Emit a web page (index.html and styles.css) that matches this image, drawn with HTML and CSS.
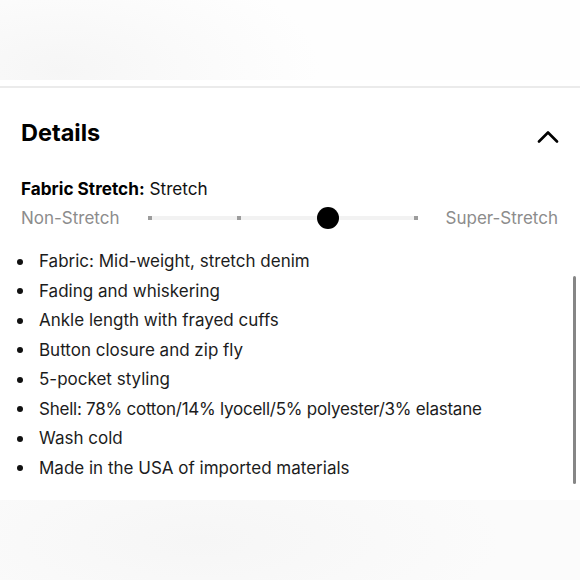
FILE: index.html
```html
<!DOCTYPE html>
<html lang="en">
<head>
<meta charset="utf-8">
<title>Details</title>
<link rel="stylesheet" href="styles.css">
</head>
<body>
<div class="page">
  <div class="top-band"></div>
  <div class="divider"></div>
  <section class="details">
    <div class="details-header">
      <h2 class="details-title">Details</h2>
      <svg class="chevron" width="22" height="13" viewBox="0 0 22 13" aria-hidden="true">
        <polyline points="2,11.5 11,2.5 20,11.5" fill="none" stroke="#000" stroke-width="2.6" stroke-linecap="round" stroke-linejoin="round"/>
      </svg>
    </div>
    <p class="stretch-label"><strong>Fabric Stretch:</strong> Stretch</p>
    <div class="stretch-scale">
      <span class="scale-end">Non-Stretch</span>
      <div class="track">
        <div class="track-line"></div>
        <div class="track-dots">
          <span class="dot"></span><span class="dot"></span><span class="dot"></span><span class="dot"></span>
        </div>
        <span class="knob"></span>
      </div>
      <span class="scale-end">Super-Stretch</span>
    </div>
    <ul class="features">
      <li>Fabric: Mid-weight, stretch denim</li>
      <li>Fading and whiskering</li>
      <li>Ankle length with frayed cuffs</li>
      <li>Button closure and zip fly</li>
      <li>5-pocket styling</li>
      <li class="compact">Shell: 78% cotton/14% lyocell/5% polyester/3% elastane</li>
      <li>Wash cold</li>
      <li>Made in the USA of imported materials</li>
    </ul>
  </section>
  <div class="bottom-band"></div>
  <div class="scrollbar"></div>
</div>
</body>
</html>
```
FILE: styles.css
```css
* { box-sizing: border-box; }
html, body { margin: 0; padding: 0; background: #fff; }
body {
  font-family: Inter, "Liberation Sans", Arial, sans-serif;
  color: #1c1c1c;
  width: 580px;
  height: 580px;
  overflow: hidden;
}
.page { position: relative; width: 580px; height: 580px; display: flex; flex-direction: column; }
.top-band {
  height: 80px;
  background: radial-gradient(ellipse 260px 120px at 60px 70px, #f6f6f6 0%, #fbfbfb 60%, #fefefe 100%);
}
.divider {
  margin-top: 6px;
  height: 2px;
  background: #ebebeb;
}
.details { padding: 31px 22px 0 21px; height: 412px; }
.details-header { display: flex; justify-content: space-between; align-items: center; height: 28px; }
.details-title { margin: 0; font-size: 23.5px; line-height: 28px; font-weight: 700; color: #000; }
.chevron { margin-top: 6px; margin-right: -1px; }
.stretch-label { margin: 32px 0 0; font-size: 17.2px; line-height: 20px; color: #111; }
.stretch-label strong { font-weight: 700; color: #000; }
.stretch-scale { display: flex; align-items: center; height: 22px; margin-top: 8px; }
.scale-end { font-size: 17px; line-height: 22px; color: #8c8c8c; }
.track { position: relative; flex: 1; margin: 0 27px 0 28px; height: 22px; }
.track-line { position: absolute; left: 2px; right: 2px; top: 9px; height: 4px; background: #f2f2f2; }
.track-dots { position: absolute; left: 0; right: 0; top: 9px; display: flex; justify-content: space-between; }
.dot { width: 4px; height: 4px; background: #9c9c9c; }
.knob { position: absolute; top: 0; left: calc(66.67% - 11.5px); width: 22px; height: 22px; border-radius: 50%; background: #000; }
.features { list-style: none; margin: 18px 0 0; padding: 0; }
.features li { display: flex; align-items: center; font-size: 17px; line-height: 29.5px; color: #1c1c1c; margin-left: -4px; }
.features li.compact { letter-spacing: -0.24px; }
.features li::before { content: ""; width: 6px; height: 6px; border-radius: 50%; background: #111; margin-right: 16px; flex: none; }
.bottom-band {
  flex: 1;
  background: radial-gradient(ellipse 300px 100px at 200px 40px, #f6f6f6 0%, #f9f9f9 60%, #fbfbfb 100%);
}
.scrollbar { position: absolute; right: 4px; top: 276px; width: 3.5px; height: 208px; border-radius: 2px; background: #868686; }
```
